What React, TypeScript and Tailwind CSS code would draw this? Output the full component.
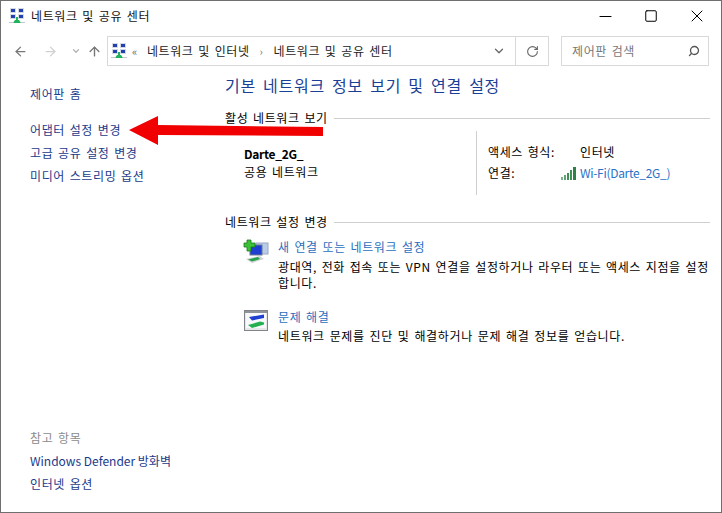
import { ArrowLeft, ArrowRight, ArrowUp, ChevronDown, RotateCw, Search, Minus, Square, X } from "lucide-react"

const font = { fontFamily: '"Noto Sans CJK KR", "Noto Sans", sans-serif' }

function NetIcon() {
    return (
        <svg width="16" height="16" viewBox="0 0 16 16" className="shrink-0">
            <rect x="1" y="0" width="6" height="5" fill="#d5dae4" />
            <rect x="9" y="0" width="6" height="5" fill="#d5dae4" />
            <rect x="1" y="6" width="6" height="5" fill="#d5dae4" />
            <rect x="9" y="6" width="6" height="5" fill="#d5dae4" />
            <rect x="2" y="1" width="4" height="3" fill="#2340b0" />
            <rect x="10" y="1" width="4" height="3" fill="#2340b0" />
            <rect x="2" y="7" width="4" height="3" fill="#2340b0" />
            <rect x="10" y="7" width="4" height="3" fill="#2340b0" />
            <rect x="7" y="9" width="2" height="3" fill="#1fb45a" />
            <path d="M4 15 L6 12 H10 L12 15 Z" fill="#1fb45a" />
            <rect x="0" y="14" width="4" height="1" fill="#c3c8cf" />
            <rect x="12" y="14" width="4" height="1" fill="#c3c8cf" />
        </svg>
    )
}

function NewConnIcon() {
    return (
        <svg width="26" height="25" viewBox="0 0 26 25" className="shrink-0">
            <rect x="13" y="4" width="12" height="11" fill="#b9cdea" stroke="#9aa8bd" />
            <rect x="7" y="6" width="12" height="10" fill="#1f3fd0" stroke="#6d7a90" />
            <path d="M3 20 L17 17 L21 20 L9 24 Z" fill="#cfd2d6" />
            <path d="M5 20.5 L15 18 L17 20 L9 22.5 Z" fill="#25a24a" />
            <path d="M4 1 H8 V4 H12 V8 H8 V12 H4 V8 H1 V4 H4 Z" fill="#3cc236" stroke="#1d7a1c" strokeWidth="0.8" />
        </svg>
    )
}

function TroubleIcon() {
    return (
        <svg width="24" height="21" viewBox="0 0 24 21" className="shrink-0">
            <rect x="0.5" y="0.5" width="23" height="20" fill="#e6e8ea" stroke="#80848a" />
            <rect x="1" y="1" width="22" height="2" fill="#8f949a" />
            <rect x="2" y="3" width="20" height="15" fill="#f8f9fa" />
            <path d="M5 7 L20 4.5 L20 8 L8 10.5 Z" fill="#1f3fd0" />
            <path d="M4 15 L16 11.5 L20 12.5 L20 14.5 L8 18 Z" fill="#25b050" />
        </svg>
    )
}

function Signal() {
    return (
        <svg width="16" height="14" viewBox="0 0 16 14" className="shrink-0">
            <rect x="0" y="11" width="2" height="3" fill="#7cb58c" />
            <rect x="3" y="9" width="2" height="5" fill="#5fa574" />
            <rect x="6" y="7" width="2" height="7" fill="#3f8f55" />
            <rect x="9" y="4" width="2" height="10" fill="#3f8f55" />
            <rect x="12" y="1" width="3" height="13" fill="#2f8048" />
        </svg>
    )
}

function SideLink({ children }: { children: React.ReactNode }) {
    return <div className="text-[12px] leading-[16px] h-[16px] text-[#1a3a8a] whitespace-nowrap">{children}</div>
}

export default function App() {
    return (
        <div style={font} className="relative w-[722px] h-[513px] bg-white border border-[#6f6f6f] overflow-hidden flex flex-col text-[12px] text-black tracking-[0.6px] [word-spacing:1.5px]">
            {/* title bar */}
            <div className="flex items-center h-[30px] pl-[8px] shrink-0">
                <NetIcon />
                <span className="ml-[6px] text-[12px] text-[#111]">네트워크 및 공유 센터</span>
                <div className="ml-auto flex items-center pr-[1px]">
                    <div className="w-[46px] flex justify-center"><Minus size={19} strokeWidth={1} absoluteStrokeWidth /></div>
                    <div className="w-[46px] flex justify-center"><Square size={14} strokeWidth={1} absoluteStrokeWidth /></div>
                    <div className="w-[46px] flex justify-center"><X size={20} strokeWidth={1} absoluteStrokeWidth /></div>
                </div>
            </div>

            {/* nav bar */}
            <div className="flex items-center h-[30px] mt-[5px] shrink-0">
                <div className="flex items-center w-[106px] pl-[12px] text-[#777]">
                    <ArrowLeft size={15} strokeWidth={2} />
                    <ArrowRight size={15} strokeWidth={2} className="ml-[15px] text-[#d0d0d0]" />
                    <ChevronDown size={10} strokeWidth={3} className="ml-[13px] text-[#b5b5b5]" />
                    <ArrowUp size={15} strokeWidth={2.2} className="ml-[6px]" />
                </div>
                <div className="flex items-center w-[442px] h-[30px] border border-[#d9d9d9] pl-[3px]">
                    <NetIcon />
                    <span className="ml-[5px] text-[#666] text-[11px]">«</span>
                    <span className="ml-[9px] text-[#222]">네트워크 및 인터넷</span>
                    <span className="ml-[10px] text-[#777] text-[11px]">›</span>
                    <span className="ml-[10px] text-[#222]">네트워크 및 공유 센터</span>
                    <div className="ml-auto w-[33px] flex justify-center text-[#666]"><ChevronDown size={14} strokeWidth={2.2} /></div>
                    <div className="w-[33px] h-full border-l border-[#d9d9d9] flex items-center justify-center text-[#666]"><RotateCw size={13} strokeWidth={2} /></div>
                </div>
                <div className="flex items-center justify-between w-[148px] h-[30px] border border-[#d9d9d9] ml-[12px] pl-[10px] pr-[8px] text-[#777]">
                    <span>제어판 검색</span>
                    <Search size={12} strokeWidth={2.6} className="-scale-x-100 text-[#555]" />
                </div>
            </div>

            {/* body */}
            <div className="flex flex-1 min-h-0">
                <div className="w-[224px] shrink-0 pl-[29px] pt-[20px] pb-[20px] flex flex-col">
                    <SideLink>제어판 홈</SideLink>
                    <div className="mt-[20px] flex flex-col gap-[7px]">
                        <SideLink>어댑터 설정 변경</SideLink>
                        <SideLink>고급 공유 설정 변경</SideLink>
                        <SideLink>미디어 스트리밍 옵션</SideLink>
                    </div>
                    <div className="mt-auto flex flex-col gap-[7px]">
                        <div className="text-[12px] leading-[16px] text-[#8c8c8c]">참고 항목</div>
                        <SideLink><span className="tracking-normal [word-spacing:0]">Windows Defender 방화벽</span></SideLink>
                        <SideLink>인터넷 옵션</SideLink>
                    </div>
                </div>

                <div className="flex-1 pr-[11px] pt-[9px]">
                    <div className="text-[16px] leading-[20px] text-[#1a3f96] tracking-[0.7px] [word-spacing:3px]">기본 네트워크 정보 보기 및 연결 설정</div>

                    <div className="flex items-center mt-[15px] h-[16px]">
                        <span>활성 네트워크 보기</span>
                        <div className="flex-1 h-px bg-[#cfcfcf] ml-[6px]" />
                    </div>
                    <div className="flex h-[64px] mt-[5px]">
                        <div className="w-[252px] pl-[19px] pt-[14px] border-r border-[#cfcfcf] leading-[18px]">
                            <div className="font-bold tracking-[-0.3px]">Darte_2G_</div>
                            <div>공용 네트워크</div>
                        </div>
                        <div className="pl-[11px] pt-[10px] leading-[21px]">
                            <div className="flex">
                                <span className="w-[92px]">액세스 형식:</span>
                                <span>인터넷</span>
                            </div>
                            <div className="flex items-center">
                                <span className="w-[73px]">연결:</span>
                                <Signal />
                                <span className="ml-[3px] text-[#2a72c8] tracking-[-0.3px]">Wi-Fi(Darte_2G_)</span>
                            </div>
                        </div>
                    </div>

                    <div className="flex items-center mt-[19px] h-[16px]">
                        <span>네트워크 설정 변경</span>
                        <div className="flex-1 h-px bg-[#cfcfcf] ml-[6px]" />
                    </div>

                    <div className="flex mt-[8px] pl-[18px]">
                        <div className="mt-[1px]"><NewConnIcon /></div>
                        <div className="ml-[9px]">
                            <div className="text-[#2a6ec0] leading-[17px]">새 연결 또는 네트워크 설정</div>
                            <div className="mt-[4px] leading-[16px] whitespace-nowrap">광대역, 전화 접속 또는 VPN 연결을 설정하거나 라우터 또는 액세스 지점을 설정<br />합니다.</div>
                        </div>
                    </div>

                    <div className="flex mt-[17px] pl-[19px]">
                        <div className="mt-[2px]"><TroubleIcon /></div>
                        <div className="ml-[10px]">
                            <div className="text-[#2a6ec0] leading-[17px]">문제 해결</div>
                            <div className="mt-[3px] leading-[16px] tracking-[0.66px]">네트워크 문제를 진단 및 해결하거나 문제 해결 정보를 얻습니다.</div>
                        </div>
                    </div>
                </div>
            </div>

            {/* red annotation arrow */}
            <svg width="200" height="34" viewBox="0 0 200 34" className="absolute left-[127px] top-[113px]">
                <path d="M1 16 L30 2 L30 11 L195 13 L195 22 L30 21 L30 31 Z" fill="#f00000" />
            </svg>
        </div>
    )
}
